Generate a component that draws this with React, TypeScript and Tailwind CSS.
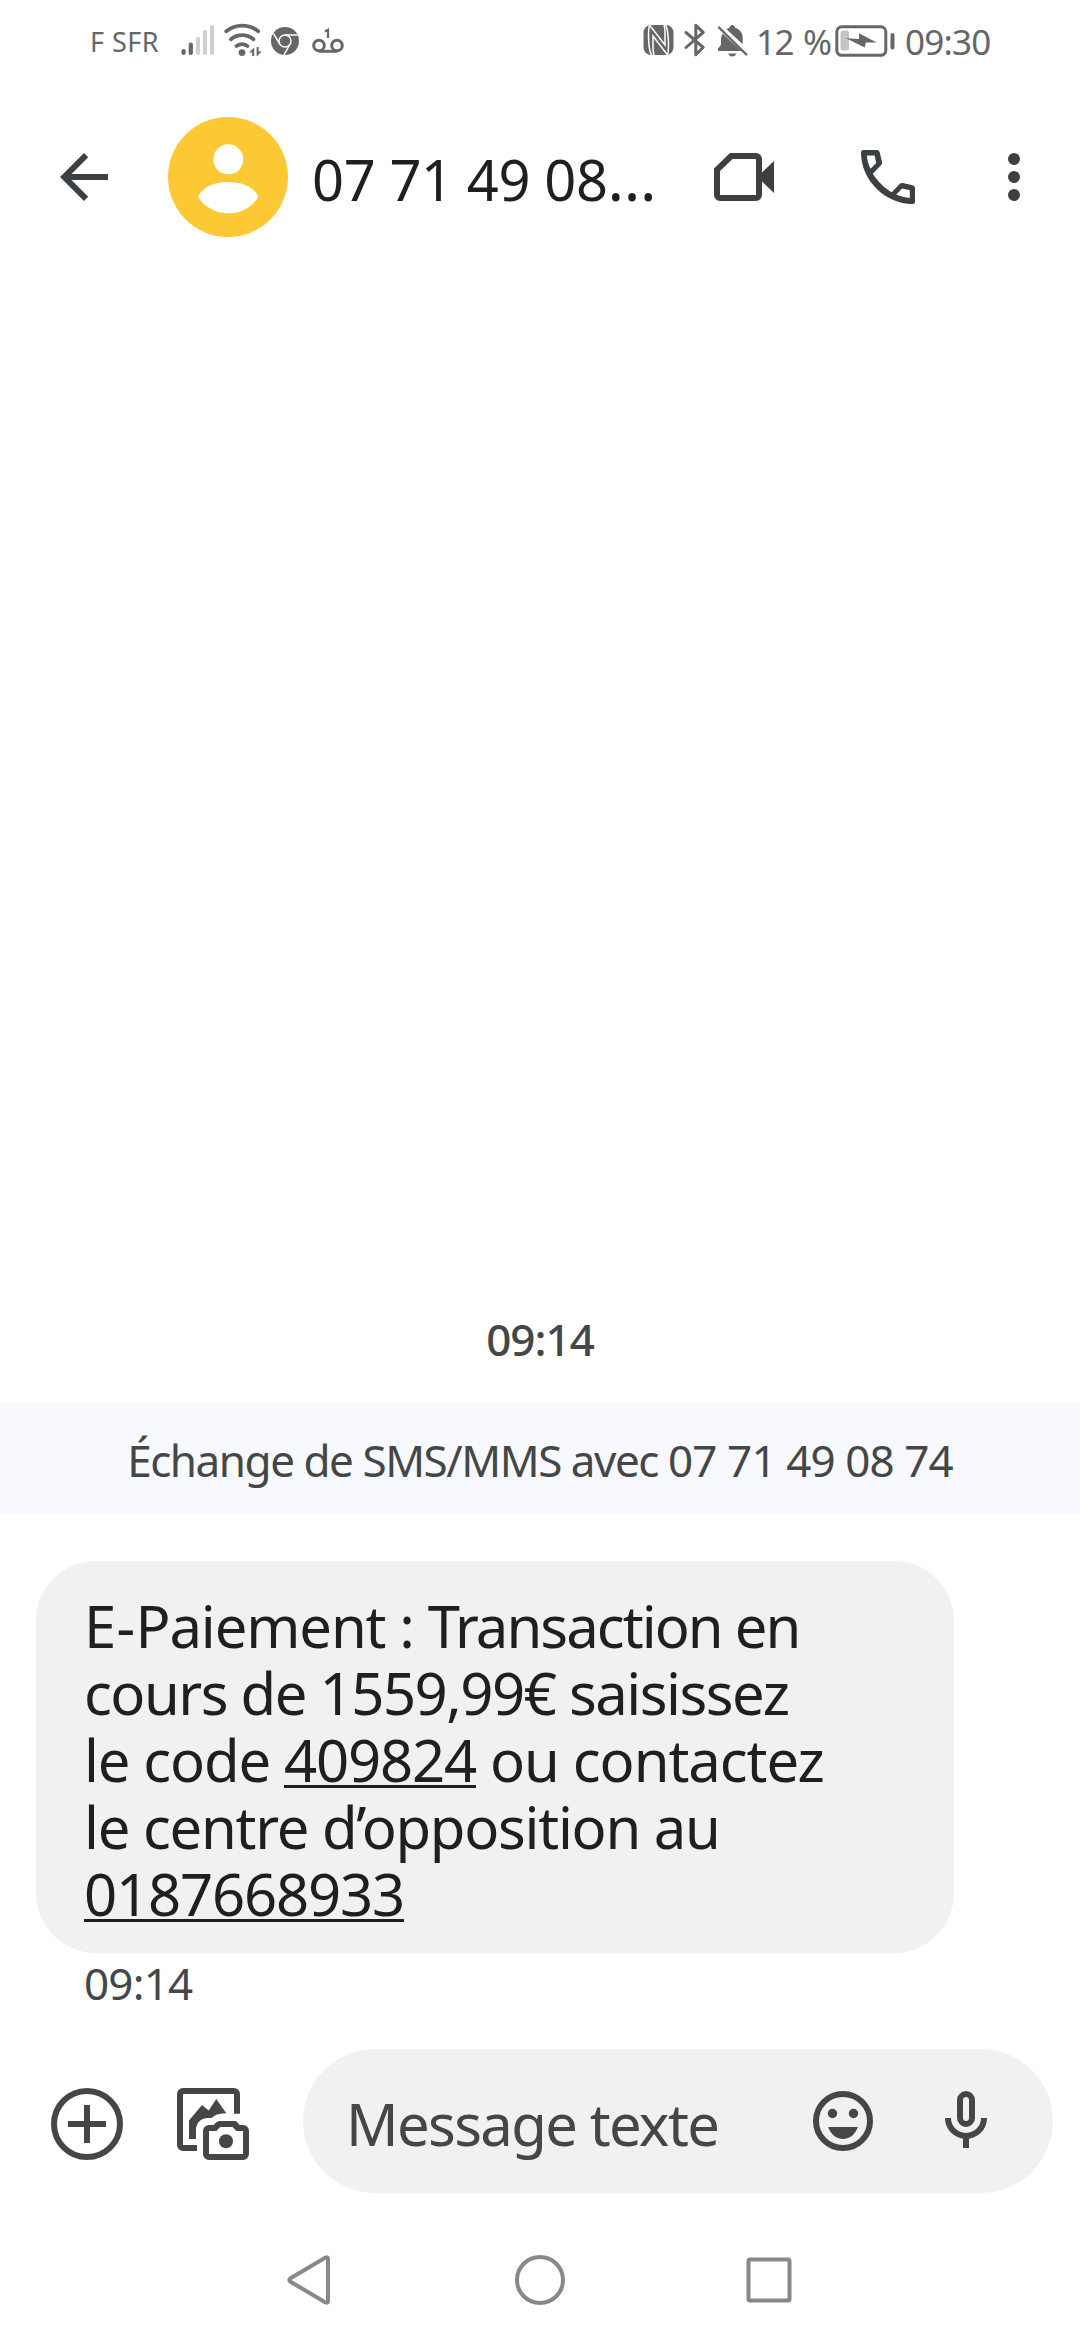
import type { ReactNode, SVGProps } from "react";

type IconProps = SVGProps<SVGSVGElement> & { children: ReactNode };

function Icon({ children, ...props }: IconProps) {
  return (
    <svg fill="currentColor" aria-hidden="true" {...props}>
      {children}
    </svg>
  );
}

function StatusBar() {
  return (
    <div className="flex h-[81px] items-start text-[#666666]">
      <span className="ml-[90px] mt-[22px] w-[91px] text-[27px] leading-[40px] tracking-[0.5px]">F SFR</span>
      <Icon className="mt-[24px] h-[32px] w-[34px]" viewBox="0 0 34 32">
        <rect x="0.5" y="25" width="4.2" height="6" rx="2" />
        <rect x="7.7" y="18.5" width="4.2" height="12.5" rx="2" />
        <g fill="#cfcfcf">
          <rect x="14.9" y="13" width="4.2" height="18" rx="2" />
          <rect x="21.9" y="6" width="4.2" height="25" rx="2" />
          <rect x="29" y="1" width="4.2" height="30" rx="2" />
        </g>
      </Icon>
      <Icon className="ml-[8px] mt-[22px] h-[36px] w-[40px]" viewBox="0 0 40 36">
        <g fill="none" stroke="currentColor" strokeWidth="3.8" strokeLinecap="round">
          <path d="M3.2 9.2a25.5 25.5 0 0 1 32 0" />
          <path d="M8 17.2a17.6 17.6 0 0 1 22.4 0" />
          <path d="M13.5 24a9.6 9.6 0 0 1 11 0" />
        </g>
        <circle cx="19" cy="30.6" r="3.4" />
        <path d="M26 30.5l5.2-5v8.5h-2v-3.5zM38.8 29.5l-5.2 5V25h2v4.5z" />
      </Icon>
      <Icon className="ml-[8px] mt-[27px] h-[28px] w-[28px]" viewBox="0 0 28 28">
        <circle cx="14" cy="14" r="14" />
        <g fill="none" stroke="#fff" strokeWidth="1.5">
          <circle cx="14" cy="14" r="6" />
          <path d="M14 8h12.7M8.8 17L2.3 6.4M19.2 17L13 27.8" />
        </g>
      </Icon>
      <Icon className="ml-[12px] mt-[27px] h-[28px] w-[34px]" viewBox="0 0 34 28">
        <g fill="none" stroke="currentColor" strokeWidth="3">
          <circle cx="8" cy="18.5" r="5.3" />
          <circle cx="26" cy="18.5" r="5.3" />
          <path d="M8 24.3h18" />
          <path d="M13.8 4.5L17 2.8V11" strokeWidth="2.2" />
        </g>
      </Icon>

      <div className="ml-auto mr-[89px] flex items-start">
        <Icon className="mt-[25px] h-[30px] w-[31px]" viewBox="0 0 31 30">
          <rect x="0.5" y="0" width="30" height="30" rx="7.5" />
          <g fill="none" stroke="#fff" strokeWidth="1.5">
            <path d="M6.5 0C5 5 5 24 8.500 30" />
            <path d="M24.500 30c1.500-5 1.500-24-2-30" />
            <path d="M6.500 0l15.500 20V7c0-3-.4-5-1-7M24.500 30L10 11v12c0 3 .4 5 1 7" />
          </g>
        </Icon>
        <Icon className="ml-[10px] mt-[23px] h-[34px] w-[22px]" viewBox="0 0 22 34">
          <path
            d="M2 9.500l17.200 14.800-7.400 7.400V2.300l7.400 7L2 24.500"
            fill="none"
            stroke="currentColor"
            strokeWidth="3"
            strokeLinecap="round"
            strokeLinejoin="round"
          />
        </Icon>
        <Icon className="ml-[11px] mt-[24px] h-[33px] w-[31px]" viewBox="0 0 31 33">
          <path d="M5.800 9.800L24.500 27H1v-2.500l3-3.500v-5c0-2.500.5-4.500 1.800-6.200z" />
          <path d="M9.500 5.300c1-.8 2-1.300 3-1.500C12.800 2 13.800 1 15.300 1s2.500 1 2.800 2.800c4.600 1.300 7.600 5 7.600 10.200v6.300z" />
          <path d="M11.300 29.500h8c-.5 2-2 3-4 3s-3.500-1-4-3z" />
          <path d="M2 3.500L29.300 30.500" fill="none" stroke="currentColor" strokeWidth="2.400" strokeLinecap="round" />
        </Icon>
        <span className="ml-[8px] mt-[22px] w-[79px] whitespace-nowrap text-[35px] leading-[40px] tracking-[-1.400px]">
          12<span className="ml-[2px]"> %</span>
        </span>
        <Icon className="mt-[24px] h-[34px] w-[61px]" viewBox="0 0 61 34">
          <rect x="1.800" y="2.800" width="49" height="28.500" rx="5" fill="none" stroke="currentColor" strokeWidth="3" />
          <rect x="5.500" y="6.500" width="8.500" height="20" rx="2.500" fill="#c4c4c4" />
          <path d="M11 14.300l13 .8V9.200L41.700 18.500H30.800l-1 5z" />
          <rect x="55.500" y="9" width="4" height="16.500" rx="2" />
        </Icon>
        <span className="ml-[9px] mt-[22px] w-[86px] whitespace-nowrap text-[35px] leading-[40px] tracking-[-0.800px]">
          09:30
        </span>
      </div>
    </div>
  );
}

function Header() {
  return (
    <header className="flex h-[192px] items-center text-[#3c4043]">
      <button className="ml-[48px]" aria-label="Retour">
        <Icon className="h-[72px] w-[72px]" viewBox="0 0 24 24">
          <path d="M20 11H7.830l5.590-5.590L12 4l-8 8 8 8 1.410-1.410L7.830 13H20v-2z" />
        </Icon>
      </button>
      <Icon className="ml-[48px] h-[120px] w-[120px]" viewBox="0 0 120 120">
        <circle cx="60" cy="60" r="60" fill="#fcc934" />
        <g fill="#fff">
          <circle cx="60.300" cy="42.300" r="15" />
          <path d="M30.700 78.500C35.500 69.700 46.500 65 60.200 65s24.800 4.700 29.600 13.500c.4.800.4 1.700 0 2.500C83.500 90.200 72.500 96.300 60.200 96.300S37 90.200 30.700 81c-.4-.8-.4-1.700 0-2.500z" />
        </g>
      </Icon>
      <h1 className="ml-[24px] w-[360px] whitespace-nowrap pt-[3px] text-[56px] leading-[72px] tracking-[-0.400px] text-[#1f1f1f]">
        07 71 49 08<span className="text-[62px] leading-none">…</span>
      </h1>
      <button className="ml-[36px]" aria-label="Appel vidéo">
        <Icon className="h-[72px] w-[72px]" viewBox="0 0 72 72">
          <path
            fillRule="evenodd"
            d="M22 12h26a6 6 0 0 1 6 6v13.500L66 20v32L54 40.500V54a6 6 0 0 1-6 6H12a6 6 0 0 1-6-6V27.500zM24.500 18L12 30v24h36V18z"
          />
        </Icon>
      </button>
      <button className="ml-[72px]" aria-label="Appeler">
        <Icon className="h-[72px] w-[72px]" viewBox="-9 -9 72 72">
          <path
            fillRule="evenodd"
            d="M2.500 0H16q2.300 0 2.700 2.200L21 12q.4 1.900-1 3.300L11.800 23.800C16.500 31 23 38 30.700 42.300L38.600 34q1.400-1.400 3.300-1l9.600 2.200Q54 35.800 54 38v13.500q0 2.500-2.500 2.500C24 54 0 30 0 2.500Q0 0 2.500 0zM5.800 5.500c.4 4.300 1.600 9 3.700 13.300L15.200 13 13.600 5.500zM35.200 44.500c4.600 2 9 3 13.600 3.600v-7.800l-7.600-1.700z"
          />
        </Icon>
      </button>
      <button className="ml-[54px]" aria-label="Plus d’options">
        <Icon className="h-[72px] w-[72px]" viewBox="0 0 72 72">
          <circle cx="36" cy="18" r="6" />
          <circle cx="36" cy="36" r="6" />
          <circle cx="36" cy="54" r="6" />
        </Icon>
      </button>
    </header>
  );
}

function Message() {
  return (
    <div className="ml-[36px] mt-[48px] h-[392px] w-[918px] rounded-[60px] bg-[#f1f1f1] pl-[48px] pt-[31px]">
      <p className="whitespace-pre text-[58px] leading-[67px] tracking-[-1.250px] text-[#1f1f1f] [text-decoration-skip-ink:none]">
        <span className="tracking-[0.300px]">E-</span>
        <span className="tracking-[-1.150px]">Paiement : </span>
        <span className="tracking-[-1.950px]">Transaction en</span>
        <br />
        <span className="tracking-[-1.500px]">cours de 1559,99€ saisissez</span>
        <br />
        <span className="tracking-[-1.150px]">le code </span>
        <a className="tracking-[-1.180px] underline decoration-[3px] underline-offset-[3px]">409824</a>
        <span className="tracking-[-1.050px]"> ou contactez</span>
        <br />
        <span className="tracking-[-1.280px]">le centre d’opposition au</span>
        <br />
        <a className="tracking-[-1.180px] underline decoration-[3px] underline-offset-[3px]">0187668933</a>
      </p>
    </div>
  );
}

function Composer() {
  return (
    <div className="mt-[31px] flex h-[144px] items-center text-[#444746]">
      <button className="ml-[51px] mt-[6px]" aria-label="Ajouter">
        <Icon className="h-[72px] w-[72px]" viewBox="0 0 72 72">
          <g fill="none" stroke="currentColor" strokeWidth="6">
            <circle cx="36" cy="36" r="33" />
            <path d="M36 17v38M17 36h38" />
          </g>
        </Icon>
      </button>
      <button className="ml-[54px] mt-[6px]" aria-label="Galerie et appareil photo">
        <Icon className="h-[72px] w-[72px]" viewBox="0 0 72 72">
          <path d="M6 0h51a6 6 0 0 1 6 6v19.700h-6V6H6v51h14v6H6a6 6 0 0 1-6-6V6a6 6 0 0 1 6-6z" />
          <path d="M12 32.500L25 17l6.700 5.600L39.300 11l10 14.300c-5.300.2-9.300.7-12.300 2.700-1 1-2 2-3.500 2H31c-7.500 0-12 5.500-12 12v9h-7z" />
          <path
            fillRule="evenodd"
            d="M43.500 33h13.800c1.500 0 2.700.6 3.500 1.800L62.600 37H66a6 6 0 0 1 6 6v23a6 6 0 0 1-6 6H32a6 6 0 0 1-6-6V43a6 6 0 0 1 6-6h4.500l2.700-2.500C40.300 33.500 41.700 33 43.500 33zM32 43v23h34V43h-6.500l-4-4H43.300l-4 4z"
          />
          <circle cx="49" cy="53.300" r="7" />
        </Icon>
      </button>
      <div className="ml-[54px] flex h-[144px] w-[750px] items-center rounded-full bg-[#f1f1f1]">
        <span className="ml-[43px] mt-[6px] w-[458px] whitespace-nowrap text-[58px] leading-[72px] tracking-[-1.650px]">
          Message texte
        </span>
        <Icon className="ml-[3px] h-[72px] w-[72px]" viewBox="0 0 72 72">
          <circle cx="36" cy="36" r="27" fill="none" stroke="currentColor" strokeWidth="6" />
          <circle cx="25.500" cy="28.500" r="4.700" />
          <circle cx="46.500" cy="28.500" r="4.700" />
          <path d="M21.200 42h29.600C48.500 49 43 54 36 54s-12.500-5-14.800-12z" />
        </Icon>
        <Icon className="ml-[51px] h-[72px] w-[72px]" viewBox="0 0 72 72">
          <g fill="none" stroke="currentColor" strokeWidth="6">
            <rect x="30" y="9" width="12" height="30" rx="6" />
            <path d="M18 33a18 18 0 0 0 36 0M36 51v12" />
          </g>
        </Icon>
      </div>
    </div>
  );
}

function NavigationBar() {
  return (
    <nav className="mt-[57px] flex items-center px-[278px] text-[#888888]">
      <Icon className="h-[60px] w-[60px]" viewBox="0 0 60 60">
        <path
          d="M12.500 28.300L47.500 7.500q2.500-1 2.500 1.500v42q0 2.500-2.500 1.500L12.500 31.700q-2.500-1.700 0-3.400z"
          fill="none"
          stroke="currentColor"
          strokeWidth="4"
        />
      </Icon>
      <Icon className="ml-[172px] h-[60px] w-[60px]" viewBox="0 0 60 60">
        <circle cx="30" cy="30" r="23" fill="none" stroke="currentColor" strokeWidth="4" />
      </Icon>
      <Icon className="ml-[169px] h-[60px] w-[60px]" viewBox="0 0 60 60">
        <rect x="9.500" y="9.500" width="41" height="41" rx="1.500" fill="none" stroke="currentColor" strokeWidth="4" />
      </Icon>
    </nav>
  );
}

export default function App() {
  return (
    <div className="flex h-[2340px] w-[1080px] flex-col overflow-hidden bg-white font-['Noto_Sans',sans-serif]">
      <StatusBar />
      <Header />
      <main className="flex flex-1 flex-col justify-end">
        <time className="block text-center text-[44px] font-medium leading-[60px] tracking-[-1px] text-[#444746]">
          09:14
        </time>
        <div className="mt-[33px] flex h-[111px] items-center justify-center bg-[#f8f9fe] pt-[4px] text-[44px] leading-[60px] text-[#444746]">
          <p className="whitespace-nowrap">
            <span className="tracking-[-1.450px]">Échange de SMS/MMS avec </span>
            <span className="tracking-[-0.900px]">07 71 49 08 74</span>
          </p>
        </div>
        <Message />
        <time className="ml-[84px] block h-[65px] text-[44px] leading-[60px] tracking-[-0.800px] text-[#444746]">
          09:14
        </time>
      </main>
      <Composer />
      <div className="h-[147px] shrink-0">
        <NavigationBar />
      </div>
    </div>
  );
}
